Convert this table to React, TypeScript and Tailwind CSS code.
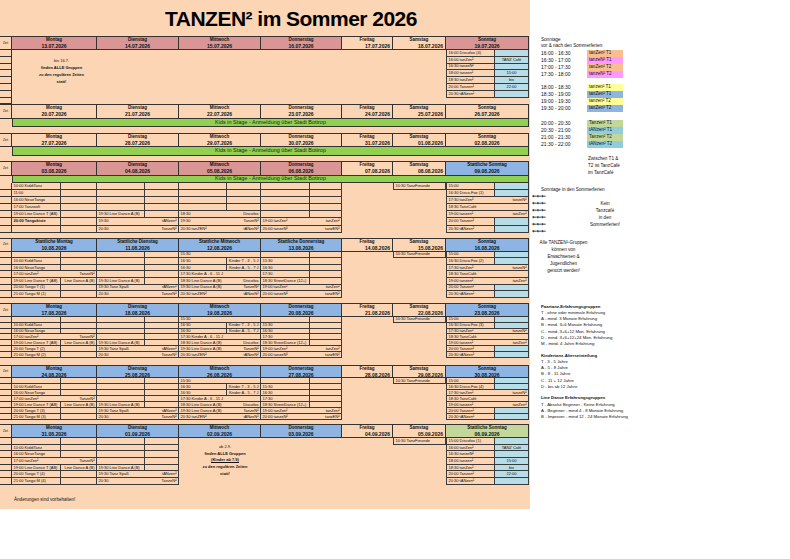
import type { ReactNode } from "react";
import clsx from "clsx";

// 13 tracks: time | Mo a b | Di a b | Mi a b | Do a b | Fr | Sa | So a b
const GRID =
  "grid grid-cols-[12px_49px_36px_48px_34px_48px_34px_49px_32px_51px_53px_49px_34px]";
const ROW = [
  "row-start-1",
  "row-start-2",
  "row-start-3",
  "row-start-4",
  "row-start-5",
  "row-start-6",
  "row-start-7",
  "row-start-8",
  "row-start-9",
  "row-start-10",
];
const DAY_COLS = [
  "col-start-2 col-span-2",
  "col-start-4 col-span-2",
  "col-start-6 col-span-2",
  "col-start-8 col-span-2",
  "col-start-10",
  "col-start-11",
  "col-start-12 col-span-2",
];

const RED = "bg-[#da9694]";
const BLUE = "bg-[#8db4e2]";
const SAGE = "bg-[#c4d79b]";
const LIGHT = "bg-[#b7dee8]";

const MON_A = "col-start-2";
const MON_B = "col-start-3";
const MON = "col-start-2 col-span-2";
const TUE_A = "col-start-4";
const TUE_B = "col-start-5";
const TUE = "col-start-4 col-span-2";
const WED_A = "col-start-6";
const WED_B = "col-start-7";
const WED = "col-start-6 col-span-2";
const THU_A = "col-start-8";
const THU_B = "col-start-9";
const THU = "col-start-8 col-span-2";
const SAT = "col-start-11";
const SUN_A = "col-start-12";
const SUN_B = "col-start-13";
const SUN = "col-start-12 col-span-2";

type Day = { name: string; date: string; fill?: string };

type Spec = {
  row: number;
  col: string;
  l?: ReactNode;
  r?: ReactNode;
  c?: ReactNode;
  fill?: string;
  edge?: boolean;
  strong?: boolean;
};

const NAMES = ["Montag", "Dienstag", "Mittwoch", "Donnerstag", "Freitag", "Samstag", "Sonntag"];

function mkDays(dates: string[], fills: (string | undefined)[], names = NAMES): Day[] {
  return dates.map((date, i) => ({ name: names[i], date, fill: fills[i] }));
}

function pair(row: number, a: string, b: string, l?: ReactNode, r?: ReactNode): Spec[] {
  return [
    { row, col: a, l },
    { row, col: b, r },
  ];
}

function mondaySummer(s: number, n: string): Spec[] {
  return [
    ...pair(s, MON_A, MON_B),
    ...pair(s + 1, MON_A, MON_B, "10:00 KiddiTanz"),
    ...pair(s + 2, MON_A, MON_B, "16:00 NeueTango"),
    { row: s + 3, col: MON, l: "17:00 tanZen²", r: "TanzeN²" },
    ...pair(s + 4, MON_A, MON_B, "19:00 Line Dance T (AB)", "Line Dance A (B)"),
    ...pair(s + 5, MON_A, MON_B, `20:00 Tango T (${n})`),
    ...pair(s + 6, MON_A, MON_B, `21:00 Tango M (${n})`),
  ];
}

function tuesdaySummer(s: number): Spec[] {
  return [
    ...pair(s, TUE_A, TUE_B),
    ...pair(s + 1, TUE_A, TUE_B),
    ...pair(s + 2, TUE_A, TUE_B),
    ...pair(s + 3, TUE_A, TUE_B),
    ...pair(s + 4, TUE_A, TUE_B, "19:30  Line Dance A (B)"),
    { row: s + 5, col: TUE, l: "19:30  Tanz Spaß", r: "tANzen²" },
    { row: s + 6, col: TUE, l: "20:30", r: "TanzeN²" },
  ];
}

function wednesdaySummer(s: number): Spec[] {
  return [
    { row: s, col: WED, l: "15:30" },
    ...pair(s + 1, WED_A, WED_B, "16:30", "Kinder T - 3 - 5 J"),
    ...pair(s + 2, WED_A, WED_B, "16:30", "Kinder A - 5 - 7 J"),
    { row: s + 3, col: WED, l: "17:30  Kinder A - 6 - 11 J" },
    { row: s + 4, col: WED, l: "18:30  Line Dance A (B)", r: "Discofox" },
    { row: s + 5, col: WED, l: "19:30  Line Dance A (B)", r: "TanzeN²" },
    { row: s + 6, col: WED, l: "20:30  tanZEN²", r: "tANzeN²" },
  ];
}

function thursdaySummer(s: number): Spec[] {
  return [
    ...pair(s, THU_A, THU_B),
    ...pair(s + 1, THU_A, THU_B, "15:30"),
    ...pair(s + 2, THU_A, THU_B, "16:30"),
    ...pair(s + 3, THU_A, THU_B, "17:30"),
    ...pair(s + 4, THU_A, THU_B, "18:30  StreetDance (12+)"),
    { row: s + 5, col: THU, l: "19:00  tanZen²", r: "tanZen²" },
    { row: s + 6, col: THU, l: "20:00  tanzeN²", r: "tanzEN²" },
  ];
}

function sundayBefore(s: number, first: string): Spec[] {
  const rows: [string, string][] = [
    [first, ""],
    ["16:00 tanZen²", "TANZ Café"],
    ["16:30 tanzeN²", ""],
    ["18:00 tanzen²", "15:00"],
    ["18:30 tanZen²", "bis"],
    ["20:00 Tanzen²", "22:00"],
    ["20:30 tANzen²", ""],
  ];
  return rows.flatMap(([l, c], i) => [
    { row: s + i, col: SUN_A, l, edge: true },
    { row: s + i, col: SUN_B, c, fill: LIGHT },
  ]);
}

function sundaySummer(s: number, n: string): Spec[] {
  return [
    { row: s, col: SUN_A, l: "15:00", edge: true },
    { row: s, col: SUN_B, fill: LIGHT },
    { row: s + 1, col: SUN_A, l: `16:30 Disco-Fox (${n})`, edge: true },
    { row: s + 1, col: SUN_B, fill: LIGHT },
    { row: s + 2, col: SUN, l: "17:30 tanZen²", r: "tanzeN²", edge: true },
    { row: s + 3, col: SUN, l: "18:30 TanzCafé", edge: true },
    { row: s + 4, col: SUN, l: "19:00 tanzen²", r: "tanZen²", edge: true },
    { row: s + 5, col: SUN_A, l: "20:00 Tanzen²", edge: true },
    { row: s + 5, col: SUN_B, fill: LIGHT },
    { row: s + 6, col: SUN_A, l: "20:30 tANzen²", edge: true },
    { row: s + 6, col: SUN_B, fill: LIGHT },
  ];
}

function saturday(row: number): Spec {
  return { row, col: SAT, l: "10:30  TanzFreunde", edge: true };
}

function Slot({ s }: { s: Spec }) {
  return (
    <div
      className={clsx(
        ROW[s.row - 1],
        s.col,
        s.fill,
        "flex min-w-0 items-center overflow-hidden whitespace-nowrap border-r border-b border-[#3a3a3a] px-[1.5px] text-[4px] leading-none",
        s.edge && "border-l",
        s.c !== undefined ? "justify-center" : "justify-between",
        s.strong && "font-bold",
      )}
    >
      {s.l !== undefined && <span>{s.l}</span>}
      {s.c !== undefined && <span>{s.c}</span>}
      {s.r !== undefined && <span className="ml-auto">{s.r}</span>}
    </div>
  );
}

function DayHead({ day, i }: { day: Day; i: number }) {
  const narrow = i === 4 || i === 5;
  return (
    <div
      className={clsx(
        "row-start-1 flex flex-col justify-center border-t border-r border-b border-[#333] px-[2px] font-bold leading-[6px]",
        DAY_COLS[i],
        day.fill,
      )}
    >
      <span className="text-center text-[4.5px]">{day.name}</span>
      <span className={clsx("text-[5px]", narrow ? "text-right" : "text-center")}>{day.date}</span>
    </div>
  );
}

function Week({
  rows,
  days,
  bar,
  timeRows = [],
  cells = [],
  className,
  children,
}: {
  rows: string;
  days: Day[];
  bar?: boolean;
  timeRows?: number[];
  cells?: Spec[];
  className?: string;
  children?: ReactNode;
}) {
  return (
    <div className={clsx(GRID, rows, className)}>
      <div className="row-start-1 col-start-1 flex items-center justify-center border-t border-r border-b border-[#333] text-[3px]">
        Zeit
      </div>
      {days.map((day, i) => (
        <DayHead key={day.date} day={day} i={i} />
      ))}
      {bar && (
        <div className="row-start-2 col-start-2 col-span-12 flex items-center justify-center border-r border-b border-l border-[#333] bg-[#92d050] text-[5.5px] leading-none text-[#1d2b12]">
          Kids in Stage - Anmeldung über Stadt Bottrop
        </div>
      )}
      {timeRows.map((r) => (
        <div key={r} className={clsx(ROW[r - 1], "col-start-1 border-r border-b border-[#333]")} />
      ))}
      {cells.map((s, i) => (
        <Slot key={i} s={s} />
      ))}
      {children}
    </div>
  );
}

const SLOTS: [string, string, string][][] = [
  [
    ["16:00 - 16:30", "tanZen² T1", "bg-[#fabf8f]"],
    ["16:30 - 17:00", "tanzeN² T1", "bg-[#ff99ff]"],
    ["17:00 - 17:30", "tanZen² T2", "bg-[#fabf8f]"],
    ["17:30 - 18:00", "tanzeN² T2", "bg-[#ff99ff]"],
  ],
  [
    ["18:00 - 18:30", "tanzen² T1", "bg-[#ffff99]"],
    ["18:30 - 19:00", "tanZen² T1", "bg-[#8db4e2]"],
    ["19:00 - 19:30", "tanzen² T2", "bg-[#ffff99]"],
    ["19:30 - 20:00", "tanZen² T2", "bg-[#8db4e2]"],
  ],
  [
    ["20:00 - 20:30", "Tanzen² T1", "bg-[#c4d79b]"],
    ["20:30 - 21:00", "tANzen² T1", "bg-[#92cddc]"],
    ["21:00 - 21:30", "Tanzen² T2", "bg-[#c4d79b]"],
    ["21:30 - 22:00", "tANzen² T2", "bg-[#92cddc]"],
  ],
];

function Legend() {
  return (
    <div className="flex flex-1 flex-col pt-[37px] pl-[11px] text-[4.6px] leading-[6px] text-[#111]">
      <p>Sonntage</p>
      <p>vor &amp; nach den Sommerferien:</p>
      {SLOTS.map((group, g) => (
        <div
          key={g}
          className={clsx("flex flex-col", g === 0 && "mt-[0.5px]", g === 1 && "mt-[6px]", g === 2 && "mt-[8px]")}
        >
          {group.map(([time, label, fill]) => (
            <div key={time} className="flex h-[7px] items-center">
              <span className="w-[46px] text-[5px]">{time}</span>
              <span className={clsx("flex h-[7px] w-[36px] items-center pl-[2px]", fill)}>{label}</span>
            </div>
          ))}
        </div>
      ))}
      <div className="mt-[7px] ml-[47px] flex flex-col leading-[7px]">
        <span>Zwischen T1 &amp;</span>
        <span>T2 ist TanzCafé</span>
        <span>im TanzCafé</span>
      </div>
      <p className="mt-[10px] leading-[7px]">Sonntage in den Sommerferien</p>
      <div className="-ml-[9px] grid grid-cols-[15px_116px] grid-rows-[repeat(6,7px)]">
        {[0, 1, 2, 3, 4, 5].map((i) => (
          <span
            key={i}
            className="col-start-1 flex items-center font-['DejaVu_Sans',sans-serif] text-[6px] font-bold leading-none tracking-[-0.5px]"
          >
            ←←←
          </span>
        ))}
        <div className="col-start-2 row-start-2 row-span-4 flex flex-col items-center leading-[7px]">
          <span>Kein</span>
          <span>Tanzcafé</span>
          <span>in den</span>
          <span>Sommerferien!</span>
        </div>
      </div>
      <div className="mt-[4px] -ml-[3px] flex w-[51px] flex-col items-center leading-[7px] whitespace-nowrap">
        <span>Alle TANZEN²-Gruppen</span>
        <span>können von</span>
        <span>Erwachsenen &amp;</span>
        <span>Jugendlichen</span>
        <span>genutzt werden!</span>
      </div>
      <div className="mt-[30px] flex flex-col text-[4.3px] leading-[6.3px]">
        <span className="font-bold">Paartanz-Erfahrungsgruppen</span>
        <span>T - ohne oder minimale Erfahrung</span>
        <span>A - mind. 3 Monate Erfahrung</span>
        <span>B - mind. 3+6 Monate Erfahrung</span>
        <span>C - mind. 3+6+12 Mon. Erfahrung</span>
        <span>D - mind. 3+6+12+24 Mon. Erfahrung</span>
        <span>M - mind. 4 Jahre Erfahrung</span>
      </div>
      <div className="mt-[5px] flex flex-col text-[4.3px] leading-[6.3px]">
        <span className="font-bold">Kindertanz-Alterseinteilung</span>
        <span>T - 3 - 5 Jahre</span>
        <span>A - 5 - 8 Jahre</span>
        <span>B - 8 - 11 Jahre</span>
        <span>C - 11 + 12 Jahre</span>
        <span>D - bis ab 12 Jahre</span>
      </div>
      <div className="mt-[5px] flex flex-col text-[4.3px] leading-[6.3px]">
        <span className="font-bold">Line Dance Erfahrungsgruppen</span>
        <span>T - Absolut Beginner - Keine Erfahrung</span>
        <span>A - Beginner - mind 4 - 8 Monate Erfahrung</span>
        <span>B - Improver - mind 12 - 24 Monate Erfahrung</span>
      </div>
    </div>
  );
}

const range = (a: number, b: number) => Array.from({ length: b - a + 1 }, (_, i) => a + i);

export default function App() {
  return (
    <div className="flex h-[559px] w-[790px] bg-white font-['Liberation_Sans',Arial,sans-serif] text-[#111]">
      <div className="flex h-[509px] w-[530px] flex-col bg-[#fcd5b4]">
        <h1 className="flex h-[36px] items-center justify-center pt-[1px] pl-[52px] text-[21px] font-bold tracking-tight text-black">
          TANZEN² im Sommer 2026
        </h1>

        <Week
          rows="grid-rows-[14px_repeat(7,6.8px)_6.4px]"
          days={mkDays(
            ["13.07.2026", "14.07.2026", "15.07.2026", "16.07.2026", "17.07.2026", "18.07.2026", "19.07.2026"],
            [RED, RED, RED, RED, undefined, undefined, RED],
          )}
          timeRows={range(2, 9)}
          cells={sundayBefore(2, "16:00 Discofox (4)")}
        >
          <div className="row-start-2 row-span-8 col-start-2 col-span-2 flex flex-col items-center pt-[7px] pl-[14px] text-[4px] leading-[7px] font-semibold whitespace-nowrap">
            <span className="font-normal">bis 16.7.</span>
            <span>finden ALLE Gruppen</span>
            <span>zu den regulären Zeiten</span>
            <span>statt!</span>
          </div>
        </Week>

        <Week
          rows="grid-rows-[15px_8px]"
          bar
          days={mkDays(
            ["20.07.2026", "21.07.2026", "22.07.2026", "23.07.2026", "24.07.2026", "25.07.2026", "26.07.2026"],
            [],
          )}
        />

        <Week
          rows="grid-rows-[14px_9px]"
          className="mt-[6px]"
          bar
          days={mkDays(
            ["27.07.2026", "28.07.2026", "29.07.2026", "30.07.2026", "31.07.2026", "01.08.2026", "02.08.2026"],
            [],
          )}
        />

        <Week
          rows="grid-rows-[15px_7px_repeat(7,7.1px)]"
          className="mt-[5px]"
          bar
          days={mkDays(
            ["03.08.2026", "04.08.2026", "05.08.2026", "06.08.2026", "07.08.2026", "08.08.2026", "09.08.2026"],
            [RED, RED, RED, RED, undefined, undefined, BLUE],
            [...NAMES.slice(0, 6), "Stattliche Sonntag"],
          )}
          timeRows={range(3, 9)}
          cells={[
            ...pair(3, MON_A, MON_B, "10:00 KiddiTanz"),
            ...pair(4, MON_A, MON_B, "11:00"),
            ...pair(5, MON_A, MON_B, "16:00 NeueTango"),
            ...pair(6, MON_A, MON_B, "17:00 Tanzwelt"),
            ...pair(7, MON_A, MON_B, "19:00 Line Dance T (AB)"),
            { row: 8, col: MON_A, l: "20:00 Tangokiste", strong: true },
            { row: 8, col: MON_B },
            ...pair(9, MON_A, MON_B),
            ...[3, 4, 5, 6].flatMap((r) => pair(r, TUE_A, TUE_B)),
            ...pair(7, TUE_A, TUE_B, "19:30  Line Dance A (B)"),
            { row: 8, col: TUE, l: "19:30", r: "tANzen²" },
            { row: 9, col: TUE, l: "20:30", r: "TanzeN²" },
            ...[3, 4, 5, 6].flatMap((r) => pair(r, WED_A, WED_B)),
            { row: 7, col: WED, l: "18:30", r: "Discofox" },
            { row: 8, col: WED, l: "19:30", r: "TanzeN²" },
            { row: 9, col: WED, l: "20:30  tanZEN²", r: "tANzeN²" },
            ...[3, 4, 5, 6, 7].flatMap((r) => pair(r, THU_A, THU_B)),
            { row: 8, col: THU, l: "19:00  tanZen²", r: "tanZen²" },
            { row: 9, col: THU, l: "20:00  tanzeN²", r: "tanzEN²" },
            saturday(3),
            ...sundaySummer(3, "1"),
          ]}
        />

        <Week
          rows="grid-rows-[14px_repeat(7,6.6px)]"
          className="mt-[5px]"
          days={mkDays(
            ["10.08.2026", "11.08.2026", "12.08.2026", "13.08.2026", "14.08.2026", "15.08.2026", "16.08.2026"],
            [BLUE, BLUE, BLUE, BLUE, undefined, undefined, BLUE],
            [
              "Stattliche Montag",
              "Stattliche Dienstag",
              "Stattliche Mittwoch",
              "Stattliche Donnerstag",
              "Freitag",
              "Samstag",
              "Sonntag",
            ],
          )}
          timeRows={range(2, 8)}
          cells={[
            ...mondaySummer(2, "1"),
            ...tuesdaySummer(2),
            ...wednesdaySummer(2),
            ...thursdaySummer(2),
            saturday(2),
            ...sundaySummer(2, "2"),
          ]}
        />

        <Week
          rows="grid-rows-[14px_repeat(7,5.9px)]"
          className="mt-[5px]"
          days={mkDays(
            ["17.08.2026", "18.08.2026", "19.08.2026", "20.08.2026", "21.08.2026", "22.08.2026", "23.08.2026"],
            [BLUE, BLUE, BLUE, BLUE, undefined, undefined, BLUE],
          )}
          timeRows={range(2, 8)}
          cells={[
            ...mondaySummer(2, "2"),
            ...tuesdaySummer(2),
            ...wednesdaySummer(2),
            ...thursdaySummer(2),
            saturday(2),
            ...sundaySummer(2, "3"),
          ]}
        />

        <Week
          rows="grid-rows-[13px_repeat(7,6px)]"
          className="mt-[7px]"
          days={mkDays(
            ["24.08.2026", "25.08.2026", "26.08.2026", "27.08.2026", "28.08.2026", "29.08.2026", "30.08.2026"],
            [BLUE, BLUE, BLUE, BLUE, undefined, undefined, BLUE],
          )}
          timeRows={range(2, 8)}
          cells={[
            ...mondaySummer(2, "3"),
            ...tuesdaySummer(2),
            ...wednesdaySummer(2),
            ...thursdaySummer(2),
            saturday(2),
            ...sundaySummer(2, "4"),
          ]}
        />

        <Week
          rows="grid-rows-[14px_repeat(7,6.7px)]"
          className="mt-[4px]"
          days={mkDays(
            ["31.08.2026", "01.09.2026", "02.09.2026", "03.09.2026", "04.09.2026", "05.09.2026", "06.09.2026"],
            [BLUE, BLUE, BLUE, BLUE, undefined, undefined, SAGE],
            [...NAMES.slice(0, 6), "Stattliche Sonntag"],
          )}
          timeRows={range(2, 8)}
          cells={[...mondaySummer(2, "4"), ...tuesdaySummer(2), saturday(2), ...sundayBefore(2, "15:00 Discofox (1)")]}
        >
          <div className="row-start-2 row-span-7 col-start-6 col-span-2 flex flex-col items-center pt-[6px] pl-[10px] text-[4px] leading-[6.7px] font-semibold whitespace-nowrap">
            <span className="font-normal">ab 2.9.</span>
            <span>finden ALLE Gruppen</span>
            <span className="underline">(Kinder ab 7.9)</span>
            <span>zu den regulären Zeiten</span>
            <span>statt!</span>
          </div>
        </Week>

        <p className="mt-[12px] pl-[14px] text-[4.6px] leading-[6px]">Änderungen sind vorbehalten!</p>
      </div>

      <Legend />
    </div>
  );
}
